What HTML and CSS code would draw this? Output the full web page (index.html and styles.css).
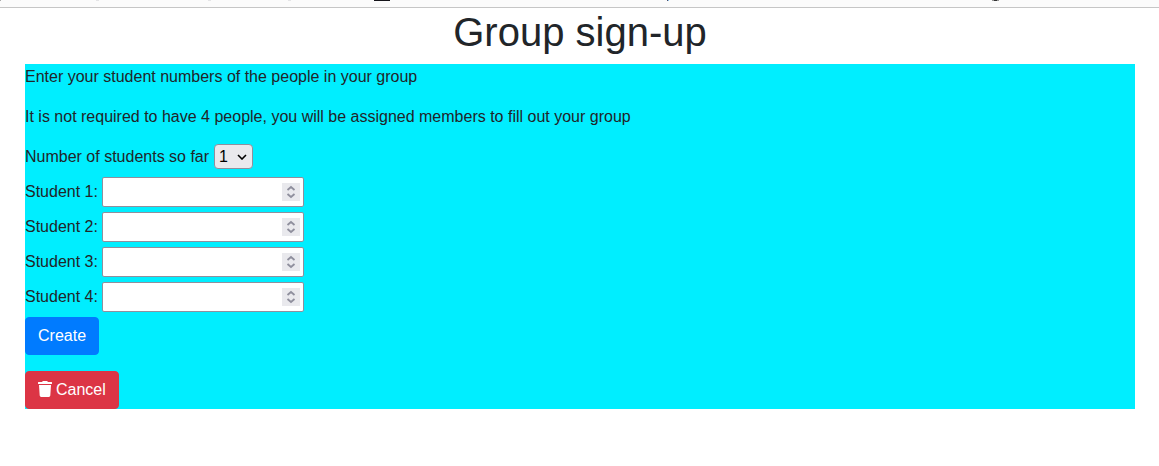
FILE: index.html
```html
<!DOCTYPE html>
<html lang="en">
<head>
<meta charset="utf-8">
<title>Group sign-up</title>
<link rel="stylesheet" href="styles.css">
</head>
<body>
<div class="toolbar-edge" aria-hidden="true">
  <svg width="1159" height="1" viewBox="0 0 1159 1" shape-rendering="crispEdges">
    <path fill="#aaa" d="M0 0h1v1H0z"/>
    <path fill="#e4e4e6" d="M96 0h3v1h-3zM208 0h3v1h-3zM288 0h3v1h-3z"/>
    <path fill="#15141a" d="M374 0h16v1h-16z"/>
    <path fill="#544c66" d="M667 0h1v1h-1z"/>
    <path fill="#8bc8ee" d="M668 0h1v1h-1z"/>
    <path fill="#999" d="M992 0h7v1h-7z"/>
    <path fill="#333" d="M994 0h3v1h-3z"/>
  </svg>
</div>
<main class="page">
  <h1 class="title">Group sign-up</h1>
  <form class="signup">
    <p class="note">Enter your student numbers of the people in your group</p>
    <p class="note">It is not required to have 4 people, you will be assigned members to fill out your group</p>
    <div class="row row-count">
      <label for="count">Number of students so far</label>
      <span class="select-wrap">
        <select id="count" class="count"><option>1</option><option>2</option><option>3</option><option>4</option></select>
        <svg class="chevron" width="10" height="6" viewBox="0 0 10 6"><path d="M1 1l4 4 4-4"/></svg>
      </span>
    </div>
    <div class="students">
      <div class="row">
        <label for="s1">Student 1:</label>
        <span class="number-wrap"><input id="s1" class="number" type="number"><svg class="spinner" width="18" height="18" viewBox="0 0 18 18"><path d="M5.500 7L9 4 12.500 7M5.500 11L9 14 12.500 11"/></svg></span>
      </div>
      <div class="row">
        <label for="s2">Student 2:</label>
        <span class="number-wrap"><input id="s2" class="number" type="number"><svg class="spinner" width="18" height="18" viewBox="0 0 18 18"><path d="M5.500 7L9 4 12.500 7M5.500 11L9 14 12.500 11"/></svg></span>
      </div>
      <div class="row">
        <label for="s3">Student 3:</label>
        <span class="number-wrap"><input id="s3" class="number" type="number"><svg class="spinner" width="18" height="18" viewBox="0 0 18 18"><path d="M5.500 7L9 4 12.500 7M5.500 11L9 14 12.500 11"/></svg></span>
      </div>
      <div class="row">
        <label for="s4">Student 4:</label>
        <span class="number-wrap"><input id="s4" class="number" type="number"><svg class="spinner" width="18" height="18" viewBox="0 0 18 18"><path d="M5.500 7L9 4 12.500 7M5.500 11L9 14 12.500 11"/></svg></span>
      </div>
    </div>
    <div class="actions">
      <button class="btn btn-create" type="submit">Create</button>
      <button class="btn btn-cancel" type="button"><svg class="trash" width="14" height="16" viewBox="0 0 14 16"><path fill="#fff" d="M0 1.500Q0 1 .5 1H4L4.600 .3Q4.800 0 5.200 0H8.800Q9.200 0 9.400 .3L10 1h3.500q.5 0 .5.500V2.500q0 .5-.5.500H.5Q0 3 0 2.500zM1 4H13L12.300 14.600Q12.200 16 10.800 16H3.200Q1.800 16 1.700 14.600z"/></svg>Cancel</button>
    </div>
  </form>
</main>
</body>
</html>
```
FILE: styles.css
```css
* {
  box-sizing: border-box;
}

body {
  margin: 0;
  background: #fff;
  color: #212529;
  font: 16px/24px "Liberation Sans", Arial, sans-serif;
}

.toolbar-edge {
  height: 8px;
  overflow: hidden;
  background: #fbfbfb;
  border-bottom: 1px solid #c6c6c6;
}

.toolbar-edge svg {
  display: block;
}

.page {
  padding: 0 24px 0 25px;
}

.title {
  margin: 0 0 8px;
  font-size: 40px;
  font-weight: 500;
  line-height: 48px;
  text-align: center;
}

.signup {
  padding-top: 1px;
  background: #00eeff;
}

.note {
  margin: 0 0 16px;
}

.note + .note {
  margin-bottom: 15px;
}

.row {
  display: flex;
  align-items: center;
  gap: 4px;
}

.row-count {
  gap: 5px;
  margin-bottom: 8px;
}

.select-wrap,
.number-wrap {
  position: relative;
  display: flex;
}

.count {
  appearance: none;
  width: 39px;
  height: 25px;
  margin: 0;
  padding: 0 4px;
  border: 1px solid #8f8f9d;
  border-radius: 4px;
  background: #e9e9ed;
  color: #000;
  font: inherit;
  line-height: 23px;
}

.chevron {
  position: absolute;
  right: 6px;
  top: 10px;
  fill: none;
  stroke: #000;
  stroke-width: 1.6;
  pointer-events: none;
}

.students {
  display: grid;
  gap: 5px;
  margin-bottom: 5px;
}

.number {
  appearance: textfield;
  width: 202px;
  height: 30px;
  margin: 0;
  padding: 2px 22px 2px 3px;
  border: 1px solid #8f8f9d;
  border-radius: 2px;
  background: #fff;
  font: inherit;
}

.number::-webkit-inner-spin-button {
  appearance: none;
  margin: 0;
}

.spinner {
  position: absolute;
  right: 4px;
  top: 6px;
  background: #e9e9ed;
  fill: none;
  stroke: #8f8f9d;
  stroke-width: 1.8;
  pointer-events: none;
}

.actions {
  display: flex;
  flex-direction: column;
  align-items: flex-start;
  gap: 16px;
}

.btn {
  display: flex;
  align-items: center;
  gap: 4px;
  margin: 0;
  padding: 6px 12px;
  border: 1px solid;
  border-radius: 4px;
  color: #fff;
  font: inherit;
}

.btn-create {
  border-color: #007bff;
  background: #007bff;
}

.btn-cancel {
  border-color: #dc3545;
  background: #dc3545;
}

.trash {
  margin-bottom: 2px;
}
```
